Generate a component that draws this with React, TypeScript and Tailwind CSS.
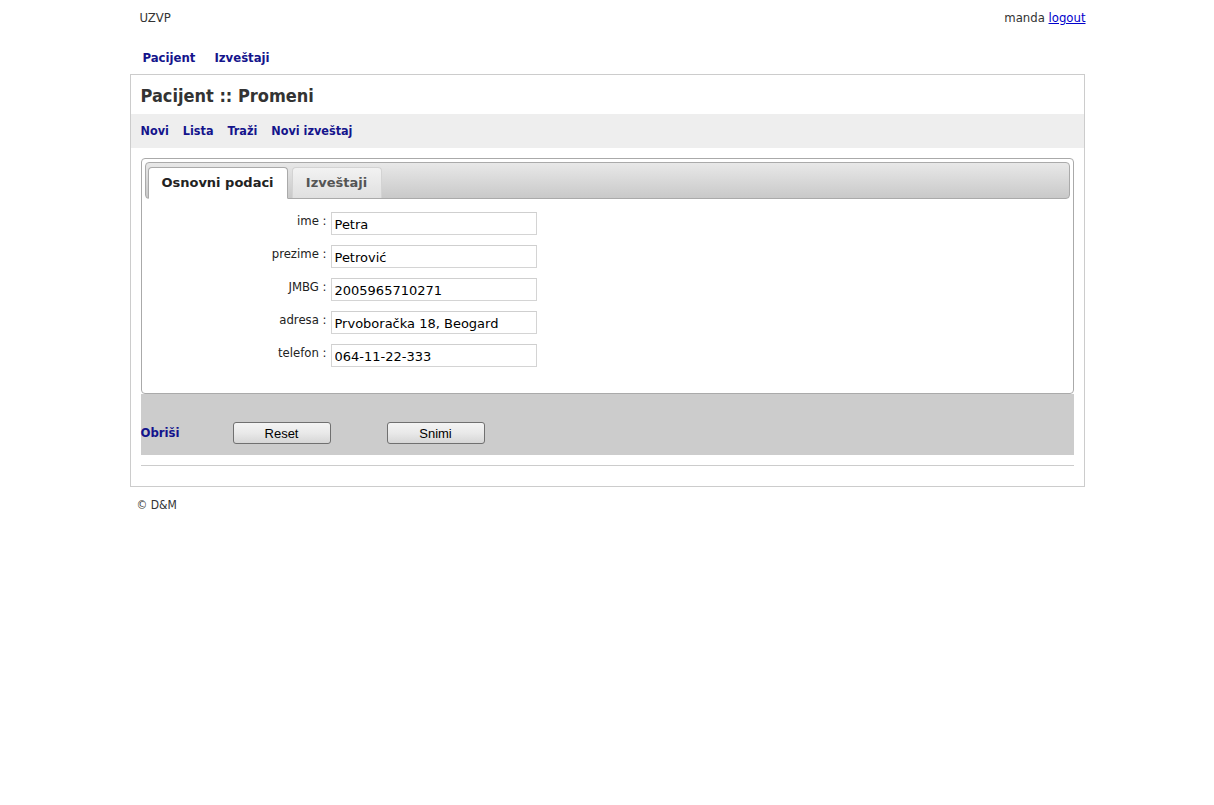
import React from "react";

const condensed = { fontFamily: '"DejaVu Sans Condensed", "DejaVu Sans", sans-serif' };
const verdana = { fontFamily: '"DejaVu Sans", Verdana, sans-serif' };
const arial = { fontFamily: '"Liberation Sans", Arial, sans-serif' };

const fields: [string, string][] = [
  ["ime", "Petra"],
  ["prezime", "Petrović"],
  ["JMBG", "2005965710271"],
  ["adresa", "Prvoboračka 18, Beogard"],
  ["telefon", "064-11-22-333"],
];

function Btn({ label }: { label: string }) {
  return (
    <button
      type="button"
      style={arial}
      className="w-[98px] h-[22px] rounded-[3px] border border-[#707070] bg-gradient-to-b from-[#f4f4f4] via-[#e9e9e9] to-[#d6d6d6] text-[13px] text-black leading-none"
    >
      {label}
    </button>
  );
}

export default function App() {
  return (
    <div className="min-h-screen bg-white">
      <div className="w-[955px] mx-auto" style={condensed}>
        <div className="flex justify-between pt-[10px] text-[13px] leading-[15px] text-[#333]">
          <span className="pl-[10px]">UZVP</span>
          <span className="-mr-px">
            manda <a href="#" className="text-[#0000cc] underline">logout</a>
          </span>
        </div>
        <div className="flex gap-[19px] pl-[13px] mt-[26px] h-[23px] text-[13px] font-bold text-[#14148c] leading-[14px]">
          <a href="#">Pacijent</a>
          <a href="#">Izveštaji</a>
        </div>
        <div className="border border-[#cccccc]">
          <div className="h-[39px] flex items-center px-[10px] pt-[1px] text-[18px] font-bold text-[#333]">
            Pacijent :: Promeni
          </div>
          <div className="h-[34px] bg-[#eeeeee] flex items-center gap-[14px] px-[10px] text-[12.5px] font-bold text-[#14148c]">
            <a href="#">Novi</a>
            <a href="#">Lista</a>
            <a href="#">Traži</a>
            <a href="#">Novi izveštaj</a>
          </div>
          <div className="mx-[10px] mt-[10px] border border-[#aaaaaa] rounded-[4px] p-[3px] pb-[26px]">
            <div className="h-[37px] border border-[#aaaaaa] rounded-[4px] bg-gradient-to-b from-[#e8e8e8] to-[#c9c9c9] flex items-end gap-[4px] pl-[2px]" style={verdana}>
              <div className="h-[32px] -mb-px w-[140px] justify-center bg-white border border-[#aaaaaa] border-b-white rounded-t-[4px] flex items-center text-[13px] font-bold text-[#222]">
                Osnovni podaci
              </div>
              <div className="h-[31px] w-[90px] justify-center bg-gradient-to-b from-[#f2f2f2] to-[#e0e0e0] border border-[#d3d3d3] border-b-0 rounded-t-[4px] flex items-center text-[13px] font-bold text-[#555]">
                Izveštaji
              </div>
            </div>
            <div className="mt-[13px] flex flex-col gap-[10px]">
              {fields.map(([l, v]) => (
                <div key={l} className="flex h-[23px]">
                  <div className="w-[182px] text-right text-[13px] text-[#222] leading-[15px] pt-[1px]">
                    {l} :
                  </div>
                  <input
                    readOnly
                    value={v}
                    style={verdana}
                    className="ml-[4px] w-[206px] h-[23px] border border-[#d4d4d4] border-t-[#cfcfcf] px-[3px] pt-[2px] text-[13px] text-black outline-none"
                  />
                </div>
              ))}
            </div>
          </div>
          <div className="mx-[10px] h-[61px] bg-[#cccccc] flex items-center pt-[17px]">
            <a href="#" className="w-[92px] text-[13px] font-bold text-[#14148c]">Obriši</a>
            <Btn label="Reset" />
            <div className="w-[56px]" />
            <Btn label="Snimi" />
          </div>
          <div className="mx-[10px] mt-[10px] mb-[20px] border-t border-[#cccccc]" />
        </div>
        <div className="pl-[7px] mt-[11px] text-[12px] leading-[14px] text-[#333]">© D&amp;M</div>
      </div>
    </div>
  );
}
